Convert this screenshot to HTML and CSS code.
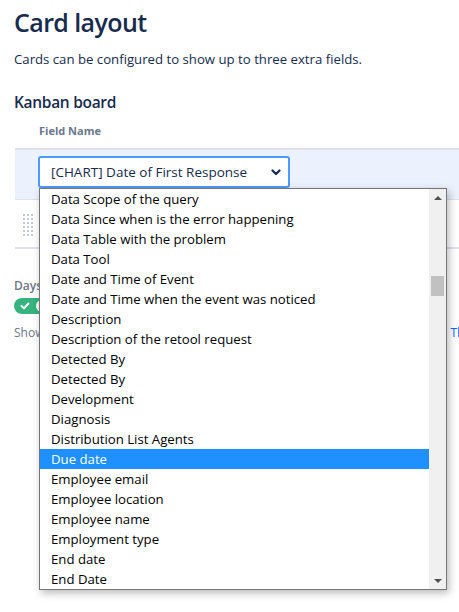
FILE: index.html
```html
<!DOCTYPE html>
<html>
<head>
<meta charset="utf-8">
<link rel="stylesheet" href="styles.css">
</head>
<body>
<div class="page">
  <h1 class="title">Card layout</h1>
  <p class="desc">Cards can be configured to show up to three extra fields.</p>
  <h2 class="subtitle">Kanban board</h2>
  <div class="table">
    <div class="thead">Field Name</div>
    <div class="row row-active">
      <div class="select">
        <span class="select-text">[CHART] Date of First Response</span>
        <svg class="chev" width="10" height="7" viewBox="0 0 10 7"><path d="M1.5 1.5 L5 5 L8.5 1.5" fill="none" stroke="#172b4d" stroke-width="2.2" stroke-linecap="round" stroke-linejoin="round"/></svg>
      </div>
    </div>
    <div class="row row-plain">
      <div class="handle">
        <span></span><span></span><span></span><span></span><span></span><span></span>
        <span></span><span></span><span></span><span></span><span></span><span></span>
        <span></span><span></span><span></span><span></span><span></span><span></span>
      </div>
    </div>
  </div>
  <div class="days-label">Days</div>
  <div class="toggle">
    <svg class="tick" width="10" height="8" viewBox="0 0 10 8"><path d="M1.5 4 L4 6.3 L8.5 1.5" fill="none" stroke="#fff" stroke-width="2" stroke-linecap="round" stroke-linejoin="round"/></svg>
    <span class="knob"></span>
  </div>
  <p class="show-line"><span class="show">Show</span><span class="link">Th</span></p>

  <div class="listbox">
    <ul class="options">
      <li>Data Scope of the query</li>
      <li>Data Since when is the error happening</li>
      <li>Data Table with the problem</li>
      <li>Data Tool</li>
      <li>Date and Time of Event</li>
      <li>Date and Time when the event was noticed</li>
      <li>Description</li>
      <li>Description of the retool request</li>
      <li>Detected By</li>
      <li>Detected By</li>
      <li>Development</li>
      <li>Diagnosis</li>
      <li>Distribution List Agents</li>
      <li class="selected">Due date</li>
      <li>Employee email</li>
      <li>Employee location</li>
      <li>Employee name</li>
      <li>Employment type</li>
      <li>End date</li>
      <li>End Date</li>
    </ul>
    <div class="scrollbar">
      <div class="arrow arrow-up"></div>
      <div class="track"><div class="thumb"></div></div>
      <div class="arrow arrow-down"></div>
    </div>
  </div>
</div>
</body>
</html>
```

FILE: styles.css
```css
html, body {
  margin: 0;
  padding: 0;
  background: #fff;
  overflow: hidden;
}
body {
  width: 459px;
  height: 612px;
  font-family: "Open Sans", "Noto Sans", sans-serif;
  color: #172b4d;
}
.page {
  position: relative;
  padding: 0 0 0 14px;
  height: 612px;
}
.title {
  margin: 0;
  padding-top: 6px;
  font-size: 25px;
  line-height: 33px;
  font-weight: 600;
  letter-spacing: -0.6px;
}
.desc {
  margin: 10px 0 0;
  font-size: 13.2px;
  line-height: 20px;
}
.subtitle {
  margin: 22px 0 0;
  font-size: 15.5px;
  line-height: 22px;
  font-weight: 600;
  letter-spacing: -0.3px;
}
.table {
  margin: 9px -60px 0 1px;
}
.thead {
  padding: 0 0 0 24px;
  font-size: 11px;
  font-weight: 700;
  line-height: 18px;
  color: #6b778c;
  height: 26px;
  border-bottom: 2px solid #dfe1e6;
}
.row {
  display: flex;
}
.row-active {
  background: #ebf1fd;
  padding-left: 23px;
  box-sizing: border-box;
  padding-top: 6px;
  border-bottom: 1px solid #dde3ee;
  height: 50px;
  align-items: flex-start;
}
.select {
  box-sizing: border-box;
  width: 252px;
  height: 32px;
  border: 2px solid #4c9aff;
  border-radius: 3px;
  background: #fff;
  display: flex;
  align-items: center;
  justify-content: space-between;
  padding: 0 7px 0 11px;
}
.select-text {
  font-size: 13.5px;
  color: #172b4d;
}
.chev {
  display: block;
}
.row-plain {
  height: 47px;
  align-items: center;
  border-bottom: 2px solid #dfe1e6;
}
.handle {
  display: grid;
  grid-template-columns: repeat(3, 2px);
  grid-auto-rows: 2px;
  gap: 2px;
  margin: 0 0 0 8px;
  padding-top: 2px;
}
.handle span {
  background: #c1c7d0;
}
.days-label {
  margin-top: 30px;
  font-size: 12px;
  font-weight: 600;
  line-height: 14px;
  color: #6b778c;
}
.toggle {
  position: relative;
  margin-top: 5px;
  width: 40px;
  height: 16px;
  border-radius: 8px;
  background: #36b37e;
}
.tick {
  position: absolute;
  left: 6px;
  top: 4px;
}
.knob {
  position: absolute;
  left: 22px;
  top: 2px;
  width: 12px;
  height: 12px;
  border-radius: 50%;
  background: #fff;
}
.show-line {
  margin: 11px 0 0;
  font-size: 12px;
  line-height: 16px;
  color: #6b778c;
  display: flex;
  white-space: nowrap;
}
.link {
  color: #0065ff;
  margin-left: 406px;
}
.listbox {
  position: absolute;
  left: 39px;
  top: 188px;
  width: 408px;
  height: 402px;
  box-sizing: border-box;
  border: 1px solid #767676;
  background: #fff;
  display: flex;
  box-shadow: 2px 3px 8px rgba(0, 0, 0, 0.28);
  font-family: "Open Sans", "Noto Sans", sans-serif;
}
.options {
  list-style: none;
  margin: 0;
  padding: 0;
  flex: 1;
}
.options li {
  height: 20px;
  line-height: 20px;
  padding-left: 11px;
  font-size: 13.2px;
  color: #000;
  white-space: nowrap;
}
.options li.selected {
  background: #1e90ff;
  color: #fff;
}
.scrollbar {
  width: 17px;
  background: #f0f0f0;
  display: flex;
  flex-direction: column;
}
.arrow {
  height: 17px;
  display: flex;
  align-items: center;
  justify-content: center;
}
.arrow-up::before {
  content: "";
  border-left: 4px solid transparent;
  border-right: 4px solid transparent;
  border-bottom: 4px solid #505050;
}
.arrow-down::before {
  content: "";
  border-left: 4px solid transparent;
  border-right: 4px solid transparent;
  border-top: 4px solid #505050;
}
.track {
  flex: 1;
  padding: 70px 2px 0;
}
.thumb {
  height: 20px;
  background: #c1c1c1;
}
```
